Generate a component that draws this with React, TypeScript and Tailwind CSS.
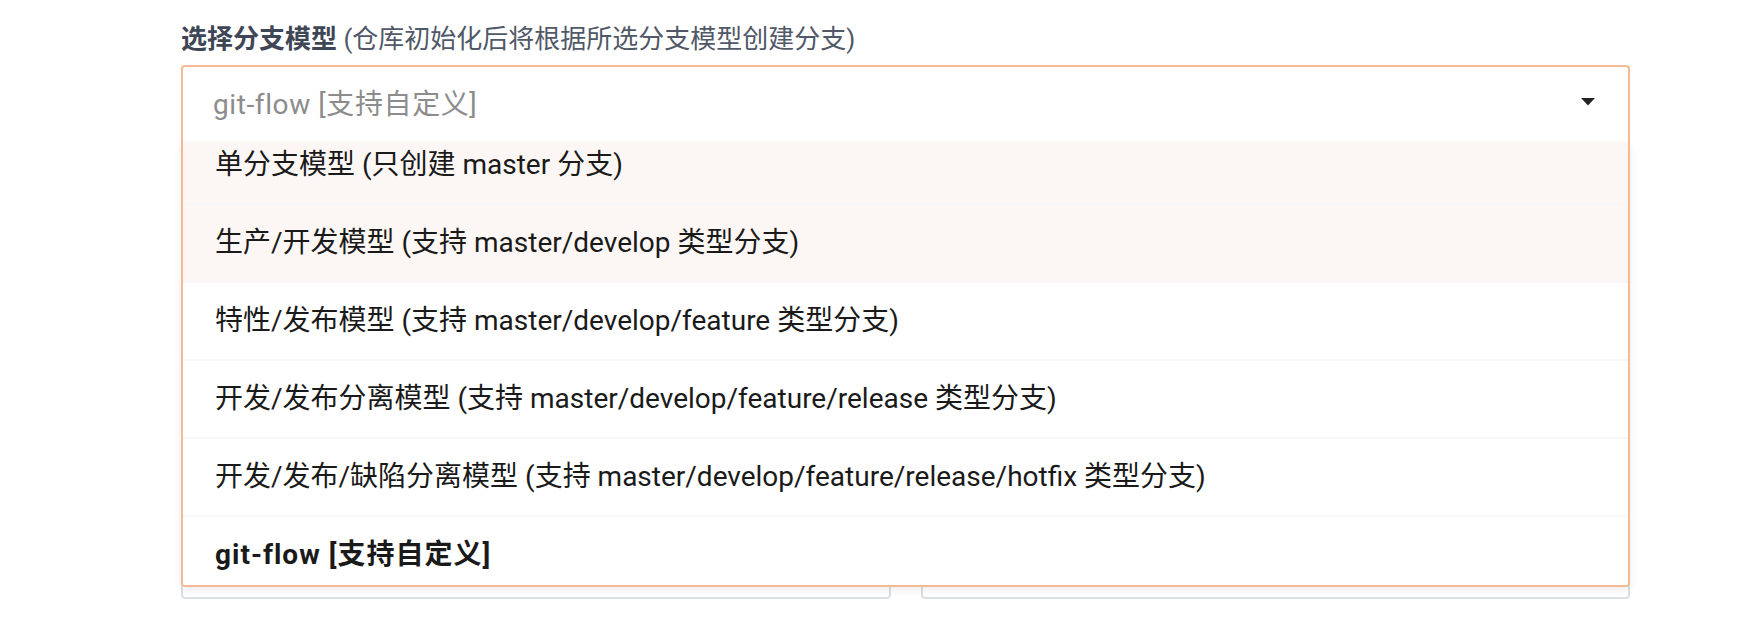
const font = "font-['Roboto','Noto_Sans_CJK_SC',sans-serif]";

const options = [
  "单分支模型 (只创建 master 分支)",
  "生产/开发模型 (支持 master/develop 类型分支)",
  "特性/发布模型 (支持 master/develop/feature 类型分支)",
  "开发/发布分离模型 (支持 master/develop/feature/release 类型分支)",
  "开发/发布/缺陷分离模型 (支持 master/develop/feature/release/hotfix 类型分支)",
  "git-flow [支持自定义]",
];

export default function App() {
  return (
    <main className={`min-h-screen w-full bg-white ${font}`}>
      <div className="ml-[181px] w-[1449px] pt-[21px]">
        {/* label */}
        <p className="h-9 text-[26px] leading-9 text-[#515867]">
          <span className="font-bold text-[#3f4656]">选择分支模型</span> (仓库初始化后将根据所选分支模型创建分支)
        </p>

        {/* open select */}
        <div className="relative mt-2">
          <div className="flex h-[77px] items-center justify-between rounded-t-[4px] border-2 border-b-0 border-[#f4b995] bg-white pl-[30px] pr-[33px]">
            <span className="text-[28px] tracking-[0.6px] text-[#8c8c8c]">git-flow [支持自定义]</span>
            <svg width="14" height="8" viewBox="0 0 14 8" className="mt-[-6px]">
              <path d="M0 0h14L7 7.5z" fill="#222" />
            </svg>
          </div>

          <div className="absolute left-0 right-0 top-[77px] z-10 h-[445px] overflow-hidden rounded-b-[4px] border-2 border-t-0 border-[#f4b995] bg-white shadow-[0_3px_8px_rgba(0,0,0,0.08)]">
            <ul className="-mt-[15px]">
              {options.map((o, i) => (
                <li
                  key={o}
                  className={`flex h-[78px] items-center border-b-2 border-[#f7f7f7] pl-[32px] text-[28px] text-[#1a1a1a] ${
                    i < 2 ? "bg-[#fcf7f4]" : "bg-white"
                  } ${i === options.length - 1 ? "font-bold tracking-[1px]" : ""}`}
                >
                  {o}
                </li>
              ))}
            </ul>
          </div>

          {/* fields behind the menu */}
          <div className="mt-[401px] flex gap-[30px]">
            <div className="h-[56px] flex-1 rounded-[4px] border-2 border-[#dcdfe5] bg-white" />
            <div className="h-[56px] flex-1 rounded-[4px] border-2 border-[#dcdfe5] bg-white" />
          </div>
        </div>
      </div>
    </main>
  );
}
